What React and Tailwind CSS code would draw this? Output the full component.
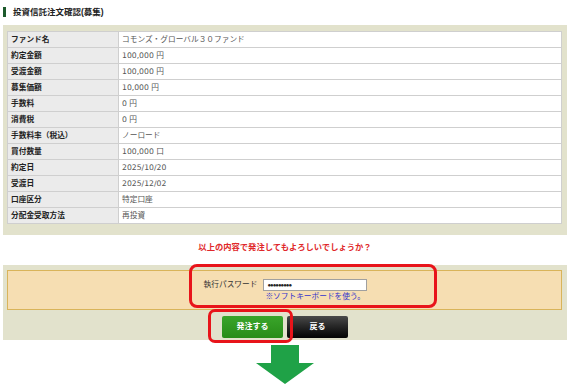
import React from 'react';

const rows = [
  ['ファンド名', 'コモンズ・グローバル３０ファンド'],
  ['約定金額', '100,000 円'],
  ['受渡金額', '100,000 円'],
  ['募集価額', '10,000 円'],
  ['手数料', '0 円'],
  ['消費税', '0 円'],
  ['手数料率（税込）', 'ノーロード'],
  ['買付数量', '100,000 口'],
  ['約定日', '2025/10/20'],
  ['受渡日', '2025/12/02'],
  ['口座区分', '特定口座'],
  ['分配金受取方法', '再投資'],
];

const font = { fontFamily: '"Liberation Sans", "Noto Sans CJK JP", sans-serif' };
const valueFont = { fontFamily: '"DejaVu Sans", "Noto Sans CJK JP", sans-serif' };

export default function App() {
  return (
    <div className="relative w-[570px] h-[384px] overflow-hidden bg-white text-[#222]" style={font}>
      {/* Title */}
      <div className="flex items-center pt-[7px] pl-[3px]">
        <div className="w-[3px] h-[10px] bg-[#1d5a2c]" />
        <h1 className="ml-[7px] text-[8.5px] leading-[10px] font-bold">投資信託注文確認(募集)</h1>
      </div>

      {/* Order details */}
      <div className="mt-[8px] mx-[3px] bg-[#e2e2cc] pt-[6px] pb-[11px] pl-[4px] pr-[5px]">
        <table className="w-full border-collapse border border-[#cfcfcf] text-[7.7px]">
          <tbody>
            {rows.map(([label, value]) => (
              <tr key={label} className="h-[16px]">
                <th className="w-[111px] bg-[#ebebeb] border border-[#cfcfcf] pl-[3px] text-left font-bold leading-[15px]">
                  {label}
                </th>
                <td className="bg-white border border-[#cfcfcf] pl-[3px] text-[#555] leading-[15px]" style={valueFont}>
                  {value}
                </td>
              </tr>
            ))}
          </tbody>
        </table>
      </div>

      {/* Confirm message */}
      <div className="h-[30px] pt-[6px] text-center text-[8.3px] leading-[12px] font-bold text-[#e0282a]">
        以上の内容で発注してもよろしいでしょうか？
      </div>

      {/* Password + buttons */}
      <div className="mx-[3px] bg-[#e2e2cc] pt-[5px] pb-[2px] pl-[4px] pr-[5px]">
        <div className="h-[40px] bg-[#f6deb2] border border-[#d9b45a] flex justify-center pt-[8px]">
          <div className="flex items-start pl-[2px]">
            <span className="text-[7.7px] leading-[11px] mr-[6px] text-[#333]">執行パスワード</span>
            <div className="flex flex-col">
              <div className="w-[104px] h-[12px] bg-white border border-[#a0a0a0] flex items-center pl-[3px] text-[6px] leading-[6px] tracking-[-1px]">
                ●●●●●●●●●
              </div>
              <span className="pl-[2px] text-[7.7px] leading-[11px] text-[#3333cc]">※ソフトキーボードを使う。</span>
            </div>
          </div>
        </div>
        <div className="flex justify-center gap-[4px] mt-[6px] pl-[1px]">
          <button className="w-[61px] h-[22px] rounded-[2px] bg-gradient-to-b from-[#3aa52a] to-[#278c18] text-white text-[8px] font-bold">
            発注する
          </button>
          <button className="w-[61px] h-[22px] rounded-[2px] bg-gradient-to-b from-[#4a4a4a] to-[#050505] text-white text-[8px] font-bold">
            戻る
          </button>
        </div>
      </div>

      {/* Down arrow */}
      <div className="flex justify-center mt-[5px]">
        <svg width="58" height="39" viewBox="0 0 58 39">
          <polygon points="15,0 43,0 43,18 58,18 29,39 0,18 15,18" fill="#1fa247" />
        </svg>
      </div>

      {/* Annotation highlights */}
      <div className="absolute left-[189px] top-[264px] w-[248px] h-[44px] rounded-[8px] border-[3px] border-[#e8141a]" />
      <div className="absolute left-[208px] top-[309px] w-[85px] h-[34px] rounded-[7px] border-[3px] border-[#e8141a]" />
    </div>
  );
}
